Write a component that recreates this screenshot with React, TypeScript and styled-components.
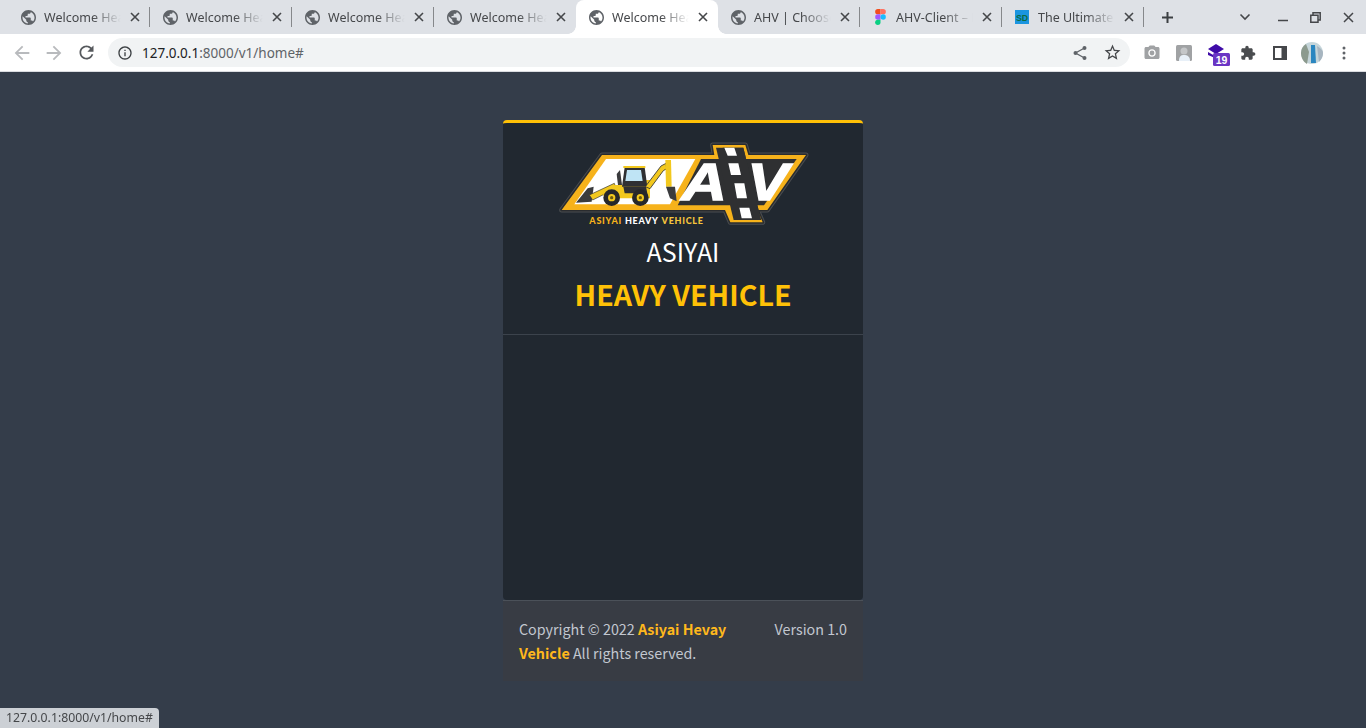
import React from "react";
import styled, { createGlobalStyle } from "styled-components";

const Global = createGlobalStyle`
  html, body { margin: 0; padding: 0; height: 100%; overflow: hidden; background: #343d4a; }
  #root { height: 100%; }
`;

const Shell = styled.div`
  display: flex;
  flex-direction: column;
  height: 728px;
  width: 1366px;
`;

const TabStrip = styled.div`
  display: flex;
  align-items: stretch;
  flex: 0 0 34px;
  padding-left: 8px;
  background: #dee1e6;
  font-family: "Noto Sans", sans-serif;
`;

const Tab = styled.div<{ $active?: boolean; $sep?: boolean }>`
  position: relative;
  flex: 0 0 142px;
  display: flex;
  align-items: center;
  box-sizing: border-box;
  padding: 0 7px 0 13px;
  background: ${(p) => (p.$active ? "#ffffff" : "transparent")};
  border-radius: ${(p) => (p.$active ? "8px 8px 0 0" : "0")};
  color: #45474a;
  &::after {
    content: "";
    display: ${(p) => (p.$sep ? "block" : "none")};
    position: absolute;
    right: 0;
    top: 7px;
    height: 20px;
    width: 1px;
    background: #86888b;
  }
`;

const Flare = styled.span<{ $side: "left" | "right" }>`
  position: absolute;
  bottom: 0;
  ${(p) => p.$side}: -8px;
  width: 8px;
  height: 8px;
  background: radial-gradient(
    circle at ${(p) => (p.$side === "left" ? "0 0" : "100% 0")},
    transparent 7.5px,
    #ffffff 8px
  );
`;

const TabIcon = styled.span`
  flex: 0 0 14px;
  width: 14px;
  height: 16px;
  display: flex;
  align-items: center;
  justify-content: center;
`;

const TabTitle = styled.span`
  margin-left: 9px;
  flex: 0 0 80px;
  font-size: 12.5px;
  white-space: nowrap;
  overflow: hidden;
  -webkit-mask-image: linear-gradient(90deg, #000 60%, transparent 96%);
  mask-image: linear-gradient(90deg, #000 60%, transparent 96%);
`;

const TabClose = styled.span`
  margin-left: 3px;
  flex: 0 0 16px;
  height: 16px;
  display: flex;
  align-items: center;
  justify-content: center;
`;

const StripButton = styled.span<{ $w: number; $gap?: number }>`
  flex: 0 0 ${(p) => p.$w}px;
  margin-left: ${(p) => p.$gap ?? 0}px;
  display: flex;
  align-items: center;
  justify-content: center;
`;

const Toolbar = styled.div`
  display: flex;
  align-items: center;
  flex: 0 0 38px;
  box-sizing: border-box;
  background: #ffffff;
  border-bottom: 1px solid #dadce0;
  padding-left: 6px;
`;

const ToolButton = styled.span`
  flex: 0 0 32px;
  height: 32px;
  display: flex;
  align-items: center;
  justify-content: center;
`;

const Omnibox = styled.div`
  flex: 0 0 1022px;
  margin: 0 6px;
  height: 29px;
  box-sizing: border-box;
  display: flex;
  align-items: center;
  padding: 0 2px 0 9px;
  background: #f1f3f4;
  border-radius: 15px;
`;

const Url = styled.div`
  flex: 1;
  margin-left: 9px;
  font-family: "Noto Sans", sans-serif;
  font-size: 13.5px;
  color: #5f6368;
  b { font-weight: 400; color: #202124; }
`;

const Page = styled.main`
  flex: 1;
  display: flex;
  flex-direction: column;
  align-items: center;
  padding-top: 48px;
  background: #343d4a;
  font-family: "Noto Sans CJK SC", "Noto Sans", sans-serif;
`;

const Column = styled.div`
  width: 360px;
`;

const Card = styled.section`
  height: 480px;
  box-sizing: border-box;
  background: #212830;
  border-top: 3px solid #ffc107;
  border-radius: 4px;
  display: flex;
  flex-direction: column;
`;

const CardHead = styled.header`
  height: 212px;
  box-sizing: border-box;
  border-bottom: 1px solid #3c434c;
  padding-top: 7px;
  text-align: center;
`;

const Logo = styled.svg`
  display: block;
  margin: 0 auto;
`;

const Asiyai = styled.div`
  margin-top: -1px;
  font-size: 25px;
  line-height: 34px;
  color: #ffffff;
`;

const Heavy = styled.div`
  margin-top: 3px;
  font-size: 28.6px;
  line-height: 46px;
  font-weight: 700;
  color: #ffc107;
`;

const Foot = styled.footer`
  height: 81px;
  box-sizing: border-box;
  padding: 16px;
  background: #383c44;
  border-top: 1px solid #4b5159;
  font-size: 14.3px;
  line-height: 24px;
  color: #c2c7d0;
  b { color: #ffb81c; font-weight: 700; }
`;

const Version = styled.span`
  float: right;
  margin-left: 20px;
`;

const Status = styled.div`
  position: fixed;
  left: 0;
  bottom: 0;
  height: 20px;
  width: 159px;
  box-sizing: border-box;
  padding-left: 6px;
  background: #ccd0d5;
  border-top-right-radius: 4px;
  font-family: "Noto Sans", sans-serif;
  font-size: 12.25px;
  line-height: 20px;
  color: #45474a;
  white-space: nowrap;
`;

const Globe = () => (
  <svg width="15" height="15" viewBox="2 2 20 20" style={{ flexShrink: 0 }}>
    <path
      d="M12 2C6.480 2 2 6.480 2 12s4.480 10 10 10 10-4.480 10-10S17.520 2 12 2zm-1 17.930c-3.950-.49-7-3.850-7-7.930 0-.62.08-1.210.21-1.790L9 15v1c0 1.100.9 2 2 2v1.930zm6.900-2.540c-.26-.81-1-1.390-1.900-1.390h-1v-3c0-.55-.45-1-1-1H8v-2h2c.55 0 1-.45 1-1V7h2c1.100 0 2-.9 2-2v-.41c2.930 1.190 5 4.060 5 7.410 0 2.080-.8 3.970-2.100 5.390z"
      fill="#5f6368"
    />
  </svg>
);

const Close = () => (
  <svg width="10" height="10" viewBox="0 0 10 10">
    <path d="M1 1l8 8M9 1l-8 8" stroke="#45474a" strokeWidth="1.6" fill="none" />
  </svg>
);

const Figma = () => (
  <svg width="11" height="16" viewBox="0 0 12 18">
    <path d="M3 0h3v6H3a3 3 0 010-6z" fill="#f24e1e" />
    <path d="M6 0h3a3 3 0 010 6H6z" fill="#ff7262" />
    <path d="M3 6h3v6H3a3 3 0 010-6z" fill="#a259ff" />
    <circle cx="9" cy="9" r="3" fill="#1abcfe" />
    <path d="M3 12h3v3a3 3 0 11-3-3z" fill="#0acf83" />
  </svg>
);

const Sd = () => (
  <svg width="16" height="16" viewBox="0 0 16 16">
    <rect width="16" height="16" fill="#1b95e0" />
    <text x="8" y="12" textAnchor="middle" fontFamily="Liberation Sans, sans-serif" fontSize="10" fontWeight="700" fill="#0b6b3f">SD</text>
  </svg>
);

const Mat = ({ d, c = "#5f6368", s = 18, flip }: { d: string; c?: string; s?: number; flip?: boolean }) => (
  <svg width={s} height={s} viewBox="0 0 24 24">
    <path d={d} fill={c} transform={flip ? "matrix(-1 0 0 1 24 0)" : undefined} />
  </svg>
);

const ARROW = "M20 11H7.830l5.590-5.590L12 4l-8 8 8 8 1.410-1.410L7.830 13H20v-2z";
const RELOAD = "M17.650 6.350C16.200 4.900 14.210 4 12 4c-4.420 0-7.990 3.580-7.990 8s3.570 8 7.990 8c3.730 0 6.840-2.550 7.730-6h-2.080c-.82 2.330-3.040 4-5.650 4-3.310 0-6-2.690-6-6s2.690-6 6-6c1.660 0 3.140.69 4.220 1.780L13 11h7V4l-2.350 2.350z";
const INFO = "M11 7h2v2h-2zm0 4h2v6h-2zm1-9C6.480 2 2 6.480 2 12s4.480 10 10 10 10-4.480 10-10S17.520 2 12 2zm0 18c-4.410 0-8-3.590-8-8s3.590-8 8-8 8 3.590 8 8-3.590 8-8 8z";
const STAR = "M22 9.240l-7.190-.62L12 2 9.190 8.630 2 9.240l5.460 4.730L5.820 21 12 17.270 18.180 21l-1.630-7.030L22 9.240zM12 15.400l-3.760 2.270 1-4.280-3.320-2.880 4.380-.38L12 6.100l1.710 4.040 4.380.38-3.320 2.880 1 4.280L12 15.400z";
const CAMERA = "M12 15.200a3.200 3.200 0 100-6.400 3.200 3.200 0 000 6.400z M9 2L7.170 4H4c-1.100 0-2 .9-2 2v12c0 1.100.9 2 2 2h16c1.100 0 2-.9 2-2V6c0-1.100-.9-2-2-2h-3.170L15 2H9zm3 15c-2.760 0-5-2.240-5-5s2.240-5 5-5 5 2.240 5 5-2.240 5-5 5z";
const PUZZLE = "M20.500 11H19V7c0-1.100-.9-2-2-2h-4V3.500C13 2.120 11.880 1 10.500 1S8 2.120 8 3.500V5H4c-1.100 0-1.990.9-1.990 2v3.800H3.500c1.490 0 2.700 1.210 2.700 2.700s-1.210 2.700-2.700 2.700H2V20c0 1.100.9 2 2 2h3.800v-1.500c0-1.490 1.210-2.700 2.700-2.700 1.490 0 2.700 1.210 2.700 2.700V22H17c1.100 0 2-.9 2-2v-4h1.500c1.380 0 2.500-1.120 2.500-2.500S21.880 11 20.500 11z";

const tabs = [
  { t: "Welcome Heavy", i: <Globe />, sep: true },
  { t: "Welcome Heavy", i: <Globe />, sep: true },
  { t: "Welcome Heavy", i: <Globe />, sep: true },
  { t: "Welcome Heavy", i: <Globe /> },
  { t: "Welcome Heavy", i: <Globe />, active: true },
  { t: "AHV | Choose", i: <Globe />, sep: true },
  { t: "AHV-Client – F", i: <Figma />, sep: true },
  { t: "The Ultimate", i: <Sd />, sep: true },
];

const FRAME = "M47 240L168 75H505L500 45H598L607 75H780L664 240H634L650 277H553L537 240Z";

const LogoArt = () => (
  <Logo width="275" height="105" viewBox="0 0 825 315">
    {/* outline and yellow frame */}
    <path d={FRAME} fill="#4a4d50" stroke="#4a4d50" strokeWidth="15" strokeLinejoin="round" />
    <path d={FRAME} fill="#2a2c2f" stroke="#2a2c2f" strokeWidth="9" strokeLinejoin="round" />
    <path d={FRAME} fill="#f6b21b" />
    {/* white field */}
    <path d="M85 223L180 87H448L372 223Z" fill="#ffffff" />
    {/* dark field */}
    <path d="M465 87H752L654 226H395Z" fill="#2f3032" />
    {/* road */}
    <path d="M510 53H592L645 270H563Z" fill="#2f3032" />
    {/* letters */}
    <text transform="translate(406 210) scale(1.2 1)" fontFamily="Liberation Sans, sans-serif" fontWeight="700" fontStyle="italic" fontSize="158" fill="#ffffff" stroke="#ffffff" strokeWidth="4">A</text>
    <text transform="translate(604 210) scale(1.17 1)" fontFamily="Liberation Sans, sans-serif" fontWeight="700" fontStyle="italic" fontSize="158" fill="#ffffff" stroke="#ffffff" strokeWidth="4">V</text>
    {/* road edges and dashes over letters */}
    <path d="M530 53H592L645 270H585Z" fill="#2f3032" />
    <path d="M535 53H565L573 77H545ZM547 100H577L585 135H555ZM565 160H595L603 205H573ZM580 233H610L618 265H587Z" fill="#ffffff" />
    {/* tagline */}
    <text x="130" y="281" fontFamily="Lato, sans-serif" fontWeight="900" fontSize="27" letterSpacing="2.2" fill="#f6b21b">
      ASIYAI <tspan fill="#ffffff">HEAVY</tspan> <tspan fill="#f6c53c">VEHICLE</tspan>
    </text>
    {/* backhoe: loader */}
    <path d="M90 218L125 175L143 170L137 215Z" fill="#3a3b3d" />
    <path d="M130 195L205 160L210 175L140 210Z" fill="#f2c81e" stroke="#2f3033" strokeWidth="2" />
    {/* exhaust */}
    <path d="M212 132L222 120L228 165L216 165Z" fill="#3a3b3d" />
    {/* body */}
    <path d="M170 195L205 165H238V150H312V205H184Z" fill="#f2c81e" />
    {/* cab */}
    <path d="M236 112H296L304 170H228Z" fill="#2f3033" />
    <path d="M232 108H298V114H232Z" fill="#f2c81e" />
    <path d="M243 120H285L290 153H238Z" fill="#bfe4f5" />
    <path d="M232 170H300L304 190H236Z" fill="#2f3033" />
    {/* boom */}
    <path d="M298 170L345 108L360 100L362 116L352 122L312 176Z" fill="#f2c81e" stroke="#2f3033" strokeWidth="2.500" />
    <path d="M358 90H375L377 170H360Z" fill="#f2c81e" />
    <path d="M360 170H387L392 214L372 205Z" fill="#3a3b3d" />
    {/* wheels */}
    <circle cx="197" cy="203" r="25" fill="#26272a" />
    <circle cx="197" cy="203" r="11" fill="#f2c81e" />
    <circle cx="197" cy="203" r="5" fill="#6b5a10" />
    <circle cx="283" cy="203" r="25" fill="#26272a" />
    <circle cx="283" cy="203" r="11" fill="#f2c81e" />
    <circle cx="283" cy="203" r="5" fill="#6b5a10" />
  </Logo>
);

export default function App() {
  return (
    <Shell>
      <Global />
      <TabStrip>
        {tabs.map((t, i) => (
          <Tab key={i} $active={t.active} $sep={t.sep}>
            {t.active && <Flare $side="left" />}
            {t.active && <Flare $side="right" />}
            <TabIcon>{t.i}</TabIcon>
            <TabTitle>{t.t}</TabTitle>
            <TabClose><Close /></TabClose>
          </Tab>
        ))}
        <StripButton $w={46}>
          <svg width="13" height="13" viewBox="0 0 13 13"><path d="M6.500 1v11M1 6.500h11" stroke="#3c4043" strokeWidth="2" /></svg>
        </StripButton>
        <StripButton $w={46} $gap={32}>
          <svg width="12" height="8" viewBox="0 0 12 8"><path d="M1.500 1.500L6 6l4.500-4.500" stroke="#45474a" strokeWidth="1.600" fill="none" /></svg>
        </StripButton>
        <StripButton $w={30}>
          <svg width="12" height="12" viewBox="0 0 12 12"><path d="M1 9.500h10" stroke="#45474a" strokeWidth="1.500" /></svg>
        </StripButton>
        <StripButton $w={34}>
          <svg width="11" height="11" viewBox="0 0 11 11"><path d="M3 3V.8h7.200V8H8M.8 3.200H8v7H.8z" stroke="#45474a" strokeWidth="1.500" fill="none" /></svg>
        </StripButton>
        <StripButton $w={32}>
          <svg width="11" height="11" viewBox="0 0 11 11"><path d="M1 1l9 9M10 1l-9 9" stroke="#45474a" strokeWidth="1.500" /></svg>
        </StripButton>
      </TabStrip>
      <Toolbar>
        <ToolButton><Mat d={ARROW} c="#b8babd" s={22} /></ToolButton>
        <ToolButton><Mat d={ARROW} c="#b8babd" s={22} flip /></ToolButton>
        <ToolButton><Mat d={RELOAD} s={21} c="#56595d" /></ToolButton>
        <Omnibox>
          <Mat d={INFO} s={16} c="#3c4043" />
          <Url><b>127.0.0.1</b>:8000/v1/home#</Url>
          <ToolButton>
            <svg width="16" height="16" viewBox="0 0 16 16">
              <path d="M12.500 3L3.500 8l9 5" stroke="#5f6368" strokeWidth="1.300" fill="none" />
              <circle cx="12.500" cy="3" r="2" fill="#5f6368" /><circle cx="3.500" cy="8" r="2" fill="#5f6368" /><circle cx="12.500" cy="13" r="2" fill="#5f6368" />
            </svg>
          </ToolButton>
          <ToolButton><Mat d={STAR} s={19} c="#45474a" /></ToolButton>
        </Omnibox>
        <ToolButton><Mat d={CAMERA} s={18} c="#a0a2a4" /></ToolButton>
        <ToolButton>
          <svg width="16" height="16" viewBox="0 0 16 16">
            <rect width="16" height="16" rx="1.500" fill="#a0a2a4" />
            <circle cx="8" cy="6" r="3.500" fill="#c4c6c8" />
            <path d="M3 16c0-5 2-6 5-6s6 1 6 6z" fill="#e8f0f8" />
          </svg>
        </ToolButton>
        <ToolButton>
          <svg width="24" height="24" viewBox="0 0 24 24" style={{ overflow: "visible" }}>
            <path d="M12 3l8 5-8 5-8-5zM4 11l7 4 6-3v3h-2l-4 2-7-3z" fill="#3f0ca8" />
            <rect x="9" y="12" width="17" height="13" rx="1.500" fill="#6a35c4" />
            <text x="17.500" y="22.500" textAnchor="middle" fontFamily="Liberation Sans, sans-serif" fontWeight="700" fontSize="10.500" fill="#fff">19</text>
          </svg>
        </ToolButton>
        <ToolButton><Mat d={PUZZLE} s={16} c="#4a4c4f" /></ToolButton>
        <ToolButton>
          <svg width="14" height="14" viewBox="0 0 14 14"><path d="M0 0h14v14H0zM2 2v10h6.500V2z" fill="#45474a" fillRule="evenodd" /></svg>
        </ToolButton>
        <ToolButton>
          <svg width="22" height="22" viewBox="0 0 22 22">
            <circle cx="11" cy="11" r="11" fill="#c5d5da" />
            <path d="M0 11a11 11 0 015-9l3 8-2 12C2 20 0 15 0 11z" fill="#8c9a8e" />
            <path d="M10 3h4l1 18h-5z" fill="#2a86c0" />
            <path d="M16 4c3 2 6 4 6 7s-1 6-4 9z" fill="#a7b5c0" />
          </svg>
        </ToolButton>
        <ToolButton>
          <svg width="4" height="14" viewBox="0 0 4 14">
            <circle cx="2" cy="2" r="1.500" fill="#5f6368" /><circle cx="2" cy="7" r="1.500" fill="#5f6368" /><circle cx="2" cy="12" r="1.500" fill="#5f6368" />
          </svg>
        </ToolButton>
      </Toolbar>
      <Page>
        <Column>
          <Card>
            <CardHead>
              <LogoArt />
              <Asiyai>ASIYAI</Asiyai>
              <Heavy>HEAVY VEHICLE</Heavy>
            </CardHead>
          </Card>
          <Foot>
            <Version>Version 1.0</Version>
            Copyright © 2022 <b>Asiyai Hevay Vehicle</b> All rights reserved.
          </Foot>
        </Column>
      </Page>
      <Status>127.0.0.1:8000/v1/home#</Status>
    </Shell>
  );
}
